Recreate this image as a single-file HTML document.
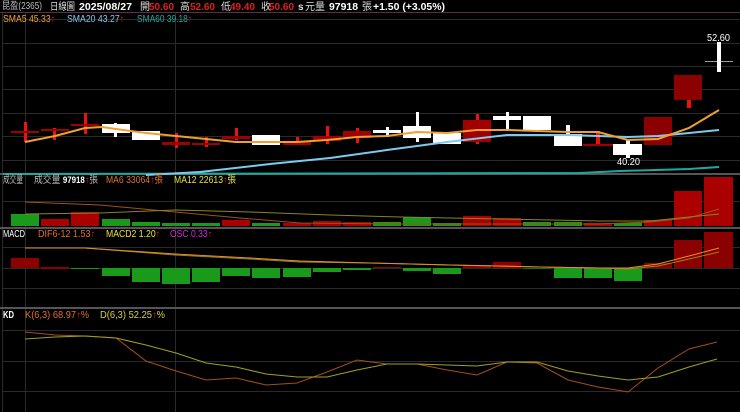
<!DOCTYPE html>
<html><head><meta charset="utf-8"><style>
body{margin:0;background:#000;width:740px;height:412px;overflow:hidden}
svg{display:block}
text{font-family:"Liberation Sans","Noto Sans CJK TC",sans-serif;font-size:10px}
.b{font-weight:bold}
</style></head><body>
<svg width="740" height="412" viewBox="0 0 740 412" xmlns="http://www.w3.org/2000/svg">
<rect width="740" height="412" fill="#000"/>
<g stroke="#2a2a2a" stroke-width="1">
<line x1="3" y1="19.5" x2="740" y2="19.5"/><line x1="3" y1="43.5" x2="740" y2="43.5"/><line x1="3" y1="66.5" x2="740" y2="66.5"/><line x1="3" y1="89.5" x2="740" y2="89.5"/><line x1="3" y1="113.5" x2="740" y2="113.5"/><line x1="3" y1="136.5" x2="740" y2="136.5"/><line x1="3" y1="160.5" x2="740" y2="160.5"/>
<line x1="3" y1="201.5" x2="740" y2="201.5"/>
<line x1="3" y1="247.5" x2="740" y2="247.5"/><line x1="3" y1="268.5" x2="740" y2="268.5"/><line x1="3" y1="288.5" x2="740" y2="288.5"/>
<line x1="3" y1="330.5" x2="740" y2="330.5"/><line x1="3" y1="361.5" x2="740" y2="361.5"/><line x1="3" y1="391.5" x2="740" y2="391.5"/>
<line x1="25.5" y1="12" x2="25.5" y2="412"/><line x1="175.5" y1="12" x2="175.5" y2="412"/>
<line x1="2.5" y1="12" x2="2.5" y2="412"/>
</g>
<line x1="0" y1="12.5" x2="740" y2="12.5" stroke="#5a3040"/>
<rect x="0" y="173" width="740" height="2" fill="#555"/>
<rect x="0" y="227" width="740" height="2" fill="#555"/>
<rect x="0" y="307" width="740" height="2" fill="#555"/>
<!-- header -->
<text x="2" y="9" fill="#bbb" font-size="8" textLength="40" lengthAdjust="spacingAndGlyphs">昆盈(2365)</text>
<text x="50" y="10" fill="#ddd" font-size="9" textLength="25" lengthAdjust="spacingAndGlyphs">日線圖</text>
<text x="79" y="10" fill="#fff" class="b" textLength="53" lengthAdjust="spacingAndGlyphs">2025/08/27</text>
<text x="140" y="10" fill="#ddd" font-size="9">開</text><text x="149" y="10" fill="#e02020" class="b" textLength="25" lengthAdjust="spacingAndGlyphs">50.60</text>
<text x="180" y="10" fill="#ddd" font-size="9">高</text><text x="190" y="10" fill="#e02020" class="b" textLength="25" lengthAdjust="spacingAndGlyphs">52.60</text>
<text x="221" y="10" fill="#ddd" font-size="9">低</text><text x="230" y="10" fill="#e02020" class="b" textLength="25" lengthAdjust="spacingAndGlyphs">49.40</text>
<text x="261" y="10" fill="#ddd" font-size="9">收</text><text x="269" y="10" fill="#e02020" class="b" textLength="25" lengthAdjust="spacingAndGlyphs">50.60</text>
<text x="298" y="10" fill="#ddd" class="b" font-size="8">s</text><text x="305" y="10" fill="#ddd" font-size="9">元</text>
<text x="315" y="10" fill="#ddd" font-size="9">量</text><text x="329" y="10" fill="#fff" class="b" textLength="29" lengthAdjust="spacingAndGlyphs">97918</text><text x="362" y="10" fill="#ddd" font-size="9">張</text>
<text x="373" y="10" fill="#fff" class="b" textLength="72" lengthAdjust="spacingAndGlyphs">+1.50 (+3.05%)</text>
<text x="3" y="22" fill="#f0a030" font-size="9" textLength="52" lengthAdjust="spacingAndGlyphs">SMA5 45.33<tspan fill="#e02020">↑</tspan></text>
<text x="67" y="22" fill="#7fc8f0" font-size="9" textLength="57" lengthAdjust="spacingAndGlyphs">SMA20 43.27<tspan fill="#e02020">↑</tspan></text>
<text x="137" y="22" fill="#20a8a0" font-size="9" textLength="55" lengthAdjust="spacingAndGlyphs">SMA60 39.18<tspan fill="#e02020">↑</tspan></text>
<!-- candles -->
<g>
<rect x="24" y="122" width="3" height="20" fill="#f01010"/><rect x="11" y="131" width="28" height="2" fill="#a00000"/>
<rect x="53" y="128" width="3" height="12" fill="#f01010"/><rect x="41" y="129" width="28" height="2" fill="#a00000"/>
<rect x="84" y="113" width="3" height="21" fill="#f01010"/><rect x="71" y="124" width="28" height="2" fill="#a00000"/>
<rect x="114" y="123" width="3" height="14" fill="#fff"/><rect x="102" y="124" width="28" height="9" fill="#fff"/>
<rect x="132" y="131" width="28" height="9" fill="#fff"/>
<rect x="175" y="133" width="3" height="15" fill="#f01010"/><rect x="162" y="142" width="28" height="3" fill="#a00000"/>
<rect x="205" y="137" width="3" height="10" fill="#f01010"/><rect x="192" y="143" width="28" height="2" fill="#a00000"/>
<rect x="235" y="128" width="3" height="12" fill="#f01010"/><rect x="222" y="136" width="28" height="3" fill="#a00000"/>
<rect x="252" y="135" width="28" height="10" fill="#fff"/>
<rect x="296" y="137" width="3" height="8" fill="#f01010"/><rect x="283" y="142" width="28" height="3" fill="#a00000"/>
<rect x="326" y="126" width="3" height="18" fill="#f01010"/><rect x="313" y="136" width="28" height="5" fill="#a00000"/>
<rect x="356" y="128" width="3" height="15" fill="#f01010"/><rect x="343" y="131" width="28" height="7" fill="#a00000"/>
<rect x="386" y="127" width="3" height="10" fill="#fff"/><rect x="373" y="130" width="28" height="3" fill="#fff"/>
<rect x="416" y="112" width="3" height="30" fill="#fff"/><rect x="403" y="126" width="28" height="12" fill="#fff"/>
<rect x="433" y="133" width="28" height="11" fill="#fff"/>
<rect x="476" y="114" width="3" height="30" fill="#f01010"/><rect x="463" y="120" width="28" height="22" fill="#a00000"/>
<rect x="506" y="112" width="3" height="18" fill="#fff"/><rect x="493" y="116" width="28" height="4" fill="#fff"/>
<rect x="523" y="116" width="28" height="14" fill="#fff"/>
<rect x="566" y="125" width="4" height="10" fill="#fff"/><rect x="554" y="134" width="28" height="12" fill="#fff"/>
<rect x="596" y="131" width="4" height="15" fill="#f01010"/><rect x="583" y="144" width="30" height="2" fill="#a00000"/>
<rect x="626" y="140" width="4" height="18" fill="#fff"/><rect x="613" y="144" width="29" height="11" fill="#fff"/>
<rect x="644" y="117" width="28" height="28" fill="#8b0000"/>
<rect x="687" y="99" width="4" height="9" fill="#f01010"/><rect x="674" y="75" width="28" height="25" fill="#8b0000"/>
<rect x="705" y="61" width="28" height="1" fill="#999"/><rect x="717" y="42" width="4" height="30" fill="#fff"/>
</g>
<text x="617" y="165" fill="#fff" font-size="9" textLength="23" lengthAdjust="spacingAndGlyphs">40.20</text>
<text x="707" y="41" fill="#fff" font-size="9" textLength="23" lengthAdjust="spacingAndGlyphs">52.60</text>
<polyline fill="none" stroke="#20a8a0" stroke-width="2" points="3,174 580,173 620,171 689,169 719,167"/>
<polyline fill="none" stroke="#7fc8f0" stroke-width="2" points="146,175 200,172 270,164 330,158 387,150 447,142 507,135 568,135 628,137 658,136 689,133 719,130"/>
<polyline fill="none" stroke="#f0a030" stroke-width="2" points="25,142 55,136 85,128 102,127 116,129 146,133 176,136 206,139 236,142 266,142 297,142 327,140 357,137 387,136 417,132 447,133 477,130 507,130 537,131 568,132 598,132 628,140 658,139 689,128 719,110"/>
<!-- volume -->
<text x="3" y="183" fill="#bbb" font-size="8" textLength="20" lengthAdjust="spacingAndGlyphs">成交量</text>
<text x="34" y="183" fill="#bbb" font-size="8" textLength="64" lengthAdjust="spacingAndGlyphs">成交量 <tspan fill="#fff" font-size="9" class="b">97918</tspan><tspan fill="#e02020">↑</tspan>張</text>
<text x="106" y="183" fill="#e0702a" font-size="9" textLength="57" lengthAdjust="spacingAndGlyphs">MA6 33064<tspan fill="#e02020">↑</tspan>張</text>
<text x="174" y="183" fill="#e8e040" font-size="9" textLength="62" lengthAdjust="spacingAndGlyphs">MA12 22613<tspan fill="#e02020">↑</tspan>張</text>
<g>
<rect x="11" y="214" width="28" height="12" fill="#1a9a1a"/>
<rect x="41" y="219" width="28" height="7" fill="#aa0000"/>
<rect x="71" y="212" width="28" height="14" fill="#aa0000"/>
<rect x="102" y="219" width="28" height="7" fill="#1a9a1a"/>
<rect x="132" y="222" width="28" height="4" fill="#1a9a1a"/>
<rect x="162" y="223" width="28" height="3" fill="#1a9a1a"/>
<rect x="192" y="223" width="28" height="3" fill="#1a9a1a"/>
<rect x="222" y="220" width="28" height="6" fill="#aa0000"/>
<rect x="252" y="223" width="28" height="3" fill="#1a9a1a"/>
<rect x="283" y="223" width="28" height="3" fill="#aa0000"/>
<rect x="313" y="221" width="28" height="5" fill="#aa0000"/>
<rect x="343" y="222" width="28" height="4" fill="#aa0000"/>
<rect x="373" y="222" width="28" height="4" fill="#1a9a1a"/>
<rect x="403" y="217" width="28" height="9" fill="#1a9a1a"/>
<rect x="433" y="223" width="28" height="3" fill="#1a9a1a"/>
<rect x="463" y="216" width="28" height="10" fill="#aa0000"/>
<rect x="493" y="218" width="28" height="8" fill="#aa0000"/>
<rect x="523" y="222" width="28" height="4" fill="#1a9a1a"/>
<rect x="554" y="222" width="28" height="4" fill="#1a9a1a"/>
<rect x="584" y="223" width="28" height="3" fill="#aa0000"/>
<rect x="614" y="223" width="28" height="3" fill="#1a9a1a"/>
<rect x="644" y="220" width="28" height="6" fill="#aa0000"/>
<rect x="674" y="191" width="28" height="35" fill="#aa0000"/>
<rect x="704" y="177" width="29" height="49" fill="#aa0000"/>
</g>
<polyline fill="none" stroke="#a0501a" stroke-width="1" points="25,202 100,205 175,212 240,218 300,223 400,224 500,224 600,224 650,222 689,218 719,209"/>
<polyline fill="none" stroke="#8a8420" stroke-width="1" points="25,214 100,213 175,210 250,212 330,215 400,217 500,219 600,221 650,221 689,217 719,214"/>
<!-- MACD -->
<text x="3" y="237" fill="#fff" font-size="9" textLength="22" lengthAdjust="spacingAndGlyphs">MACD</text>
<text x="38" y="237" fill="#e0702a" font-size="9" textLength="57" lengthAdjust="spacingAndGlyphs">DIF6-12 1.53<tspan fill="#e02020">↑</tspan></text>
<text x="106" y="237" fill="#e8e040" font-size="9" textLength="54" lengthAdjust="spacingAndGlyphs">MACD2 1.20<tspan fill="#e02020">↑</tspan></text>
<text x="170" y="237" fill="#d030d0" font-size="9" textLength="42" lengthAdjust="spacingAndGlyphs">OSC 0.33<tspan fill="#e02020">↑</tspan></text>
<g>
<rect x="11" y="258" width="28" height="10" fill="#8b0000"/>
<rect x="41" y="267" width="28" height="2" fill="#8b0000"/>
<rect x="71" y="268" width="28" height="1" fill="#1a9a1a"/>
<rect x="102" y="268" width="28" height="8" fill="#1a9a1a"/>
<rect x="132" y="268" width="28" height="14" fill="#1a9a1a"/>
<rect x="162" y="268" width="28" height="16" fill="#1a9a1a"/>
<rect x="192" y="268" width="28" height="14" fill="#1a9a1a"/>
<rect x="222" y="268" width="28" height="8" fill="#1a9a1a"/>
<rect x="252" y="268" width="28" height="10" fill="#1a9a1a"/>
<rect x="283" y="268" width="28" height="9" fill="#1a9a1a"/>
<rect x="313" y="268" width="28" height="4" fill="#1a9a1a"/>
<rect x="343" y="268" width="28" height="2" fill="#1a9a1a"/>
<rect x="373" y="267" width="28" height="1" fill="#8b0000"/>
<rect x="403" y="268" width="28" height="3" fill="#1a9a1a"/>
<rect x="433" y="268" width="28" height="6" fill="#1a9a1a"/>
<rect x="463" y="265" width="28" height="3" fill="#8b0000"/>
<rect x="493" y="262" width="28" height="6" fill="#8b0000"/>
<rect x="523" y="268" width="28" height="1" fill="#1a6a1a"/>
<rect x="554" y="268" width="28" height="10" fill="#1a9a1a"/>
<rect x="584" y="268" width="28" height="10" fill="#1a9a1a"/>
<rect x="614" y="268" width="28" height="13" fill="#1a9a1a"/>
<rect x="644" y="263" width="28" height="5" fill="#8b0000"/>
<rect x="674" y="240" width="28" height="28" fill="#8b0000"/>
<rect x="704" y="232" width="29" height="36" fill="#8b0000"/>
</g>
<polyline fill="none" stroke="#a08020" stroke-width="1" points="25,248 85,248 175,255 250,259 300,262 370,263 450,265 540,267 600,268 628,269 658,266 689,259 719,252"/>
<polyline fill="none" stroke="#e0902a" stroke-width="1" points="25,248 85,248 175,254 250,258 300,261 370,263 450,265 540,267 600,268 628,268 658,264 689,256 719,248"/>
<!-- KD -->
<text x="3" y="318" fill="#fff" font-size="9" class="b" textLength="11" lengthAdjust="spacingAndGlyphs">KD</text>
<text x="25" y="318" fill="#e0702a" font-size="9" textLength="64" lengthAdjust="spacingAndGlyphs">K(6,3) 68.97<tspan fill="#e02020">↑</tspan>%</text>
<text x="100" y="318" fill="#d8d040" font-size="9" textLength="65" lengthAdjust="spacingAndGlyphs">D(6,3) 52.25<tspan fill="#e02020">↑</tspan>%</text>
<polyline fill="none" stroke="#a0501a" stroke-width="1" points="25,332 55,335 85,336 116,338 146,361 176,371 206,380 236,378 266,385 297,383 327,372 357,360 387,364 417,364 447,370 477,375 507,362 537,363 568,380 598,387 628,392 658,368 689,349 717,342"/>
<polyline fill="none" stroke="#a0a020" stroke-width="1" points="25,339 55,337 85,336 116,338 146,345 176,353 206,363 236,367 266,374 297,377 327,377 357,370 387,364 417,364 447,365 477,366 507,362 537,362 568,371 598,376 628,380 658,377 689,367 717,359"/>
</svg>
</body></html>
